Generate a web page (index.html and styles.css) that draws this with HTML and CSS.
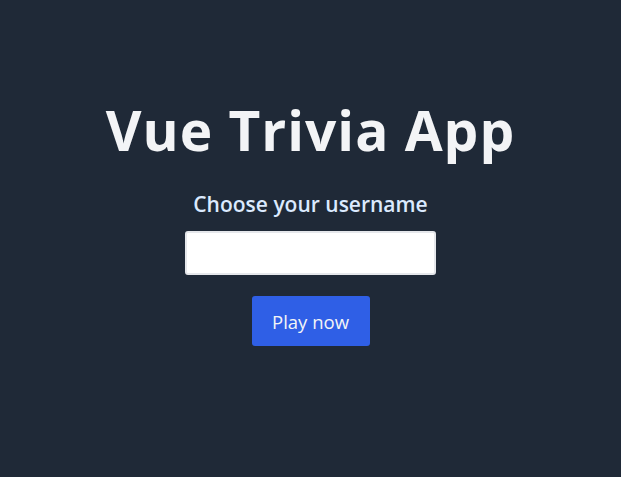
FILE: index.html
```html
<!DOCTYPE html>
<html>
<head>
<meta charset="utf-8">
<link rel="stylesheet" href="styles.css">
</head>
<body>
<main class="page">
  <h1 class="title">Vue Trivia App</h1>
  <form class="form">
    <label class="label" for="username">Choose your username</label>
    <input class="input" id="username" type="text">
    <button class="btn" type="button">Play now</button>
  </form>
</main>
</body>
</html>
```

FILE: styles.css
```css
* { box-sizing: border-box; }
html, body { margin: 0; padding: 0; }
body {
  background: #1f2937;
  color: #f3f4f6;
  font-family: "Open Sans", "Noto Sans", sans-serif;
  width: 621px;
  height: 477px;
  overflow: hidden;
}
.page {
  display: flex;
  flex-direction: column;
  align-items: center;
  padding-top: 92px;
}
.title {
  margin: 0;
  font-size: 55px;
  font-weight: 700;
  letter-spacing: 1px;
  line-height: 76px;
  color: #f3f4f6;
}
.form {
  display: flex;
  flex-direction: column;
  align-items: center;
  margin-top: 22px;
}
.label {
  font-size: 21px;
  font-weight: 600;
  line-height: 28px;
  color: #dbeafe;
}
.input {
  margin-top: 13px;
  width: 251px;
  height: 44px;
  border: 2px solid #e5e7eb;
  border-radius: 3px;
  background: #fff;
}
.btn {
  margin-top: 21px;
  width: 118px;
  height: 50px;
  border: 0;
  border-radius: 3px;
  background: #2f5fe6;
  color: #f3f4f6;
  font-family: "Open Sans", "Noto Sans", sans-serif;
  font-size: 18.5px;
}
```
